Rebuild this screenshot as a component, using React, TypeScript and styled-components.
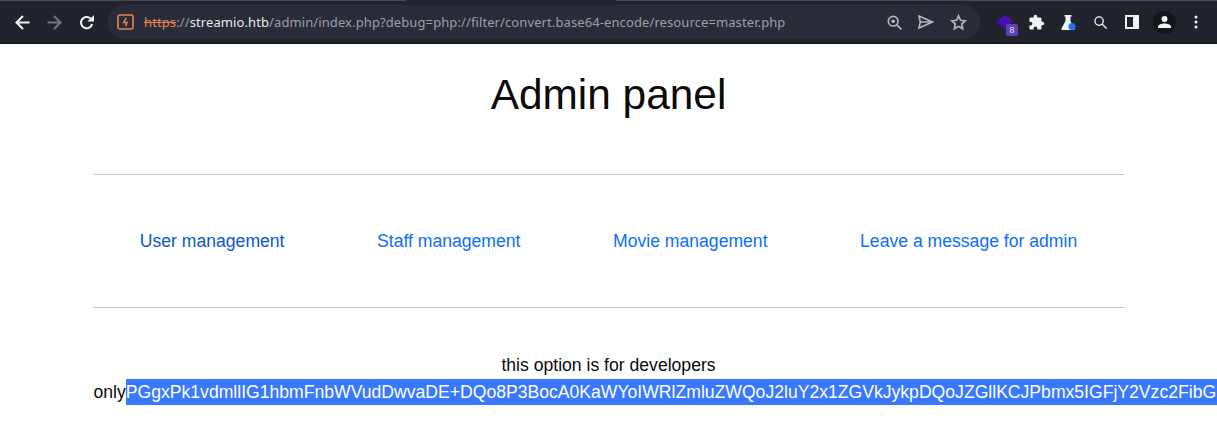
import React from 'react';
import styled, { createGlobalStyle } from 'styled-components';

const GlobalStyle = createGlobalStyle`
  html, body {
    margin: 0;
    padding: 0;
    height: 100%;
    overflow: hidden;
    background: #fff;
  }
  body {
    font-family: "Liberation Sans", Arial, sans-serif;
    color: #111;
  }
`;

const Toolbar = styled.header`
  height: 42px;
  padding: 1px 0 0;
  background: #20232c;
  border-bottom: 1px solid #0d0e12;
  display: flex;
  align-items: center;
  position: relative;
  box-sizing: content-box;
`;

// 1px edge of the tab strip, the active tab leaves a gap in it
const TabEdge = styled.div`
  position: absolute;
  top: 0;
  left: 0;
  right: 0;
  height: 1px;
  background: linear-gradient(
    to right,
    #4a4c53 406px,
    #20232c 406px,
    #20232c 616px,
    #4a4c53 616px
  );
`;

const NavButtons = styled.div`
  display: flex;
  align-items: center;
  width: 108px;
  padding-left: 6px;
  box-sizing: border-box;
  flex: none;
`;

const NavIcon = styled.span<{ $dim?: boolean }>`
  width: 32px;
  display: flex;
  justify-content: center;
  color: ${(p) => (p.$dim ? '#73757a' : '#f1f3f4')};
`;

const Omnibox = styled.div`
  width: 872px;
  height: 34px;
  flex: none;
  border-radius: 17px;
  background: #292c37;
  display: flex;
  align-items: center;
  padding: 0 12px 0 9px;
  box-sizing: border-box;
`;

const Url = styled.div`
  flex: 1;
  margin-left: 10px;
  font-family: "Noto Sans", Roboto, sans-serif;
  font-size: 13px;
  letter-spacing: 0.1px;
  white-space: nowrap;
  color: #9aa0a6;
`;

const Scheme = styled.span`
  color: #e8815a;
  text-decoration: line-through;
`;

const Host = styled.span`
  color: #e8eaed;
`;

const OmniActions = styled.div`
  display: flex;
  align-items: center;
  gap: 12px;
  color: #b4b7bb;
`;

const ActionIcon = styled.span`
  display: flex;
  width: 20px;
  justify-content: center;
`;

const Extensions = styled.div`
  flex: 1;
  display: flex;
  align-items: center;
  padding-left: 8px;
  color: #f1f3f4;
`;

const ExtSlot = styled.span`
  width: 32px;
  height: 28px;
  display: flex;
  align-items: center;
  justify-content: center;
  position: relative;
  flex: none;
`;

const Badge = styled.span`
  position: absolute;
  right: 2px;
  bottom: 0;
  width: 12px;
  height: 12px;
  border-radius: 2px;
  background: #5e3fb5;
  color: #e8e0f8;
  font-size: 9px;
  line-height: 12px;
  text-align: center;
`;

const Avatar = styled.span`
  width: 23px;
  height: 23px;
  border-radius: 50%;
  background: #15161b;
  display: flex;
  align-items: center;
  justify-content: center;
`;

const Page = styled.main`
  width: 1030px;
  margin: 0 auto;
`;

const Title = styled.h1`
  margin: 0;
  padding: 24px 0 53px;
  font-size: 42.4px;
  font-weight: 400;
  line-height: 53px;
  text-align: center;
  color: #0b0b0b;
`;

const Rule = styled.hr`
  margin: 0;
  border: 0;
  height: 1px;
  background: #c4c4c4;
`;

const Nav = styled.nav`
  height: 132px;
  display: flex;
  align-items: center;
  justify-content: space-around;
  font-size: 17.6px;
`;

const NavLink = styled.a<{ $visited?: boolean }>`
  color: ${(p) => (p.$visited ? '#0a58ca' : '#0d6efd')};
  text-decoration: none;
`;

const Note = styled.p`
  margin: 44px 0 0;
  font-size: 17.6px;
  line-height: 27px;
  text-align: center;
  color: #0b0b0b;
`;

// looks like a text selection, so the band is as tall as the line
const Selected = styled.span`
  padding: 3px 1px 3px 0;
  background: #3a78ff;
  color: #fff;
`;

const BASE64 =
  'PGgxPk1vdmllIG1hbmFnbWVudDwvaDE+DQo8P3BocA0KaWYoIWRlZmluZWQoJ2luY2x1ZGVkJykpDQoJZGllKCJPbmx5IGFjY2Vzc2FibG';

export default function App() {
  return (
    <>
      <GlobalStyle />
      <Toolbar>
        <TabEdge />
        <NavButtons>
          <NavIcon>
            <svg width="15" height="15" viewBox="0 0 16 16" fill="none" stroke="currentColor" strokeWidth="2.2">
              <path d="M15.500 8H2M8.500 1 1.600 8l6.900 7" />
            </svg>
          </NavIcon>
          <NavIcon $dim>
            <svg width="15" height="15" viewBox="0 0 16 16" fill="none" stroke="currentColor" strokeWidth="2.2">
              <path d="M.5 8H14M7.500 1l6.900 7-6.900 7" />
            </svg>
          </NavIcon>
          <NavIcon>
            <svg width="15" height="15" viewBox="0 0 16 16" fill="none">
              <path d="M14 9.500A6 6 0 1 1 12.200 3.700" stroke="currentColor" strokeWidth="2.2" />
              <path d="M9 7h7V0z" fill="currentColor" />
            </svg>
          </NavIcon>
        </NavButtons>
        <Omnibox>
          <svg width="17" height="16" viewBox="0 0 17 16" fill="none" stroke="#e8815a" style={{ flex: 'none' }}>
            <rect x="1" y="1" width="15" height="14" rx="2" strokeWidth="1.6" />
            <path d="M9.300 3.800 6.600 8.400h3.400L8.600 12.200" strokeWidth="1.500" />
          </svg>
          <Url>
            <Scheme>https</Scheme>://<Host>streamio.htb</Host>
            /admin/index.php?debug=php://filter/convert.base64-encode/resource=master.php
          </Url>
          <OmniActions>
            <ActionIcon>
              <svg width="15" height="15" viewBox="0 0 17 17" fill="none" stroke="currentColor" strokeWidth="1.9">
                <circle cx="7" cy="7" r="5.500" />
                <path d="M11 11 16.300 16.300" />
                <circle cx="7" cy="7" r="2" fill="currentColor" stroke="none" />
              </svg>
            </ActionIcon>
            <ActionIcon>
              <svg width="16" height="14" viewBox="0 0 16 14" fill="none" stroke="currentColor" strokeWidth="1.600">
                <path d="M1 1 14.500 7 1 13l1.300-6zM2.300 7h12" />
              </svg>
            </ActionIcon>
            <ActionIcon>
              <svg width="17" height="17" viewBox="0 0 18 18" fill="none" stroke="currentColor" strokeWidth="1.800">
                <path d="m9 2 2.100 4.600 5 .6-3.700 3.400 1 5L9 13.100l-4.400 2.500 1-5L1.900 7.200l5-.6z" />
              </svg>
            </ActionIcon>
          </OmniActions>
        </Omnibox>
        <Extensions>
          <ExtSlot>
            <svg width="17" height="15" viewBox="0 0 17 15">
              <path d="M0 8 8 3l8 6-8 6z" fill="#2e1a86" />
              <path d="M1 6 9 0l8 6-8 6z" fill="#4a10b8" />
            </svg>
            <Badge>8</Badge>
          </ExtSlot>
          <ExtSlot>
            <svg width="17" height="17" viewBox="0 0 24 24" fill="currentColor">
              <path d="M20.500 11H19V7c0-1.100-.9-2-2-2h-4V3.500a2.500 2.500 0 0 0-5 0V5H4c-1.100 0-2 .9-2 2v3.800h1.500a2.700 2.700 0 0 1 0 5.400H2V20c0 1.100.9 2 2 2h3.800v-1.500a2.700 2.700 0 0 1 5.400 0V22H17c1.100 0 2-.9 2-2v-4h1.500a2.500 2.500 0 0 0 0-5z" />
            </svg>
          </ExtSlot>
          <ExtSlot>
            <svg width="15" height="15" viewBox="0 0 15 15">
              <path d="M3.500 0h7v1.500H9.500V6l4 7.500c.3.800-.2 1.500-1 1.500h-11c-.8 0-1.300-.7-1-1.500l4-7.500V1.500h-1z" fill="currentColor" />
              <circle cx="11" cy="11.500" r="3.500" fill="#1a73e8" />
            </svg>
          </ExtSlot>
          <ExtSlot>
            <svg width="13" height="13" viewBox="0 0 14 14" fill="none" stroke="currentColor" strokeWidth="1.400">
              <circle cx="5.500" cy="5.500" r="4.500" />
              <path d="m8.700 8.700 5 5" />
            </svg>
          </ExtSlot>
          <ExtSlot>
            <svg width="14" height="14" viewBox="0 0 14 14">
              <path fillRule="evenodd" d="M0 0h14v14H0zM2 2v10h6V2z" fill="currentColor" />
            </svg>
          </ExtSlot>
          <ExtSlot>
            <Avatar>
              <svg width="13" height="12" viewBox="0 0 14 13" fill="currentColor">
                <circle cx="7" cy="3.300" r="3.200" />
                <path d="M0 13v-1.500C0 9.300 4 8 7 8s7 1.300 7 3.500V13z" />
              </svg>
            </Avatar>
          </ExtSlot>
          <ExtSlot>
            <svg width="4" height="14" viewBox="0 0 4 14" fill="currentColor">
              <circle cx="2" cy="2" r="1.500" />
              <circle cx="2" cy="7" r="1.500" />
              <circle cx="2" cy="12" r="1.500" />
            </svg>
          </ExtSlot>
        </Extensions>
      </Toolbar>
      <Page>
        <Title>Admin panel</Title>
        <Rule />
        <Nav>
          <NavLink href="#" $visited>User management</NavLink>
          <NavLink href="#">Staff management</NavLink>
          <NavLink href="#">Movie management</NavLink>
          <NavLink href="#">Leave a message for admin</NavLink>
        </Nav>
        <Rule />
        <Note>
          this option is for developers only<Selected>{BASE64}</Selected>
        </Note>
      </Page>
    </>
  );
}
